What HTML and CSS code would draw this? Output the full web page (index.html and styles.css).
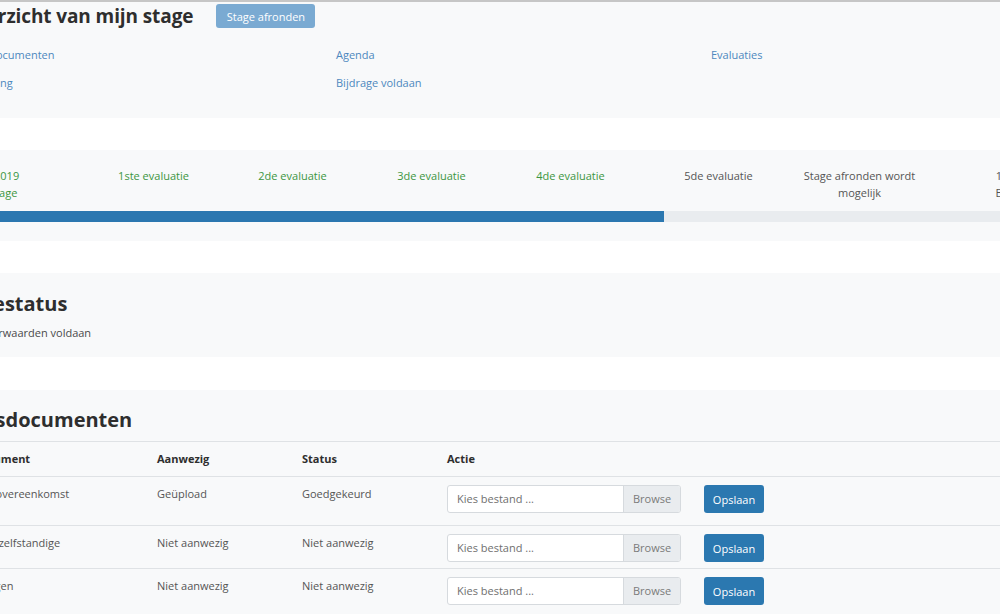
FILE: index.html
```html
<!DOCTYPE html>
<html lang="nl">
<head>
<meta charset="utf-8">
<title>Overzicht van mijn stage</title>
<link rel="stylesheet" href="styles.css">
</head>
<body>
<div class="page">
  <section class="card card-overview">
    <div class="overview-head">
      <h1 class="page-title">Overzicht van mijn stage</h1>
      <button class="btn btn-disabled" type="button">Stage afronden</button>
    </div>
    <div class="links">
      <a class="link" href="#">Stagedocumenten</a>
      <a class="link" href="#">Agenda</a>
      <a class="link" href="#">Evaluaties</a>
      <a class="link" href="#">Opvolging</a>
      <a class="link" href="#">Bijdrage voldaan</a>
    </div>
  </section>

  <section class="card card-progress">
    <div class="steps">
      <div class="step done">01/01/2019<br>Start stage</div>
      <div class="step done">1ste evaluatie</div>
      <div class="step done">2de evaluatie</div>
      <div class="step done">3de evaluatie</div>
      <div class="step done">4de evaluatie</div>
      <div class="step">5de evaluatie</div>
      <div class="step">Stage afronden wordt mogelijk</div>
      <div class="step">15/06/2019<br>Einde stage</div>
    </div>
    <div class="bar"><div class="bar-fill" style="width: 703px"></div></div>
  </section>

  <section class="card card-status">
    <h2 class="card-title title-status">Stagestatus</h2>
    <p class="status-text">Alle voorwaarden voldaan</p>
  </section>

  <section class="card card-docs">
    <h2 class="card-title title-docs">Bewijsdocumenten</h2>
    <table class="doc-table">
      <colgroup>
        <col class="c-doc"><col class="c-present"><col class="c-status"><col class="c-action">
      </colgroup>
      <thead>
        <tr><th>Document</th><th>Aanwezig</th><th>Status</th><th>Actie</th></tr>
      </thead>
      <tbody>
        <tr class="row-first">
          <td>Leerovereenkomst</td><td>Geüpload</td><td>Goedgekeurd</td>
          <td><div class="action"><div class="file"><span class="file-name">Kies bestand ...</span><span class="file-browse">Browse</span></div><button class="btn btn-primary" type="button">Opslaan</button></div></td>
        </tr>
        <tr>
          <td>Akte zelfstandige</td><td>Niet aanwezig</td><td>Niet aanwezig</td>
          <td><div class="action"><div class="file"><span class="file-name">Kies bestand ...</span><span class="file-browse">Browse</span></div><button class="btn btn-primary" type="button">Opslaan</button></div></td>
        </tr>
        <tr>
          <td>Bijlagen</td><td>Niet aanwezig</td><td>Niet aanwezig</td>
          <td><div class="action"><div class="file"><span class="file-name">Kies bestand ...</span><span class="file-browse">Browse</span></div><button class="btn btn-primary" type="button">Opslaan</button></div></td>
        </tr>
      </tbody>
    </table>
  </section>
</div>
</body>
</html>
```
FILE: styles.css
```css
html, body {
  margin: 0;
  padding: 0;
  background: #ffffff;
  overflow: hidden;
}
body {
  border-top: 2px solid #c6c6c6;
  font-family: "Open Sans", "Noto Sans", sans-serif;
  font-size: 11px;
  color: #4a4a4a;
}
.page {
  margin-left: -39px;
  width: 1120px;
}
.card {
  background: #f8f9fa;
}
.card-overview {
  padding: 1px 0 27px;
  margin-bottom: 32px;
}
.overview-head {
  display: flex;
  align-items: center;
  gap: 23px;
  height: 26px;
}
.page-title {
  margin: 0;
  font-size: 19px;
  line-height: 26px;
  font-weight: 700;
  color: #2e2e2e;
  letter-spacing: -0.1px;
}
.btn {
  font-family: inherit;
  font-size: 11px;
  border: none;
  border-radius: 3px;
  color: #ffffff;
  cursor: pointer;
}
.btn-disabled {
  background: #7aaad2;
  height: 24px;
  width: 99px;
  padding: 0;
}
.links {
  display: grid;
  grid-template-columns: 375px 375px 375px;
  row-gap: 12px;
  margin-top: 18px;
}
.link {
  color: #4d88be;
  text-decoration: none;
  line-height: 16px;
}
.card-progress {
  padding: 17px 0 19px;
  margin-bottom: 32px;
}
.steps {
  display: grid;
  grid-template-columns: 188px 139px 139px 139px 139px 157px 125px 206px;
  margin-left: -65px;
}
.step {
  text-align: center;
  line-height: 17px;
  color: #555555;
}
.step.done {
  color: #3c963f;
}
.bar {
  margin-top: 10px;
  height: 11px;
  background: #e9ecef;
}
.bar-fill {
  height: 100%;
  background: #2b77b0;
}
.card-status {
  padding: 18px 0 16px;
  margin-bottom: 33px;
}
.card-title {
  margin: 0;
  font-size: 20px;
  line-height: 26px;
  font-weight: 700;
  color: #2e2e2e;
}
.title-status {
  margin-left: -11px;
}
.title-docs {
  margin-left: -20px;
}
.status-text {
  margin: 8px 0 0 -3px;
  line-height: 16px;
}
.card-docs {
  padding: 17px 0 20px;
}
.doc-table {
  margin-top: 8px;
  border-collapse: collapse;
  table-layout: fixed;
  width: 1120px;
}
.c-doc { width: 184px; }
.c-present { width: 145px; }
.c-status { width: 145px; }
.doc-table th,
.doc-table td {
  text-align: left;
  vertical-align: top;
  padding: 9px 12px 0;
  line-height: 16px;
  border-top: 1px solid #dfe2e5;
}
.doc-table th {
  font-weight: 700;
  color: #2e2e2e;
  height: 25px;
}
.doc-table td {
  color: #555555;
  height: 33px;
}
.doc-table .row-first td {
  height: 39px;
}
.doc-table td:last-child {
  padding-top: 8px;
}
.action {
  display: flex;
  gap: 23px;
}
.file {
  display: flex;
  width: 234px;
  height: 28px;
  box-sizing: border-box;
  border: 1px solid #d6dade;
  border-radius: 3px;
  overflow: hidden;
  background: #ffffff;
}
.file-name {
  flex: 1;
  padding-left: 9px;
  line-height: 26px;
  color: #6f6f6f;
}
.file-browse {
  width: 56px;
  background: #e9ecef;
  border-left: 1px solid #d6dade;
  text-align: center;
  line-height: 26px;
  color: #7a7a7a;
}
.btn-primary {
  background: #2b78b0;
  width: 60px;
  height: 28px;
  padding: 0;
}
```
